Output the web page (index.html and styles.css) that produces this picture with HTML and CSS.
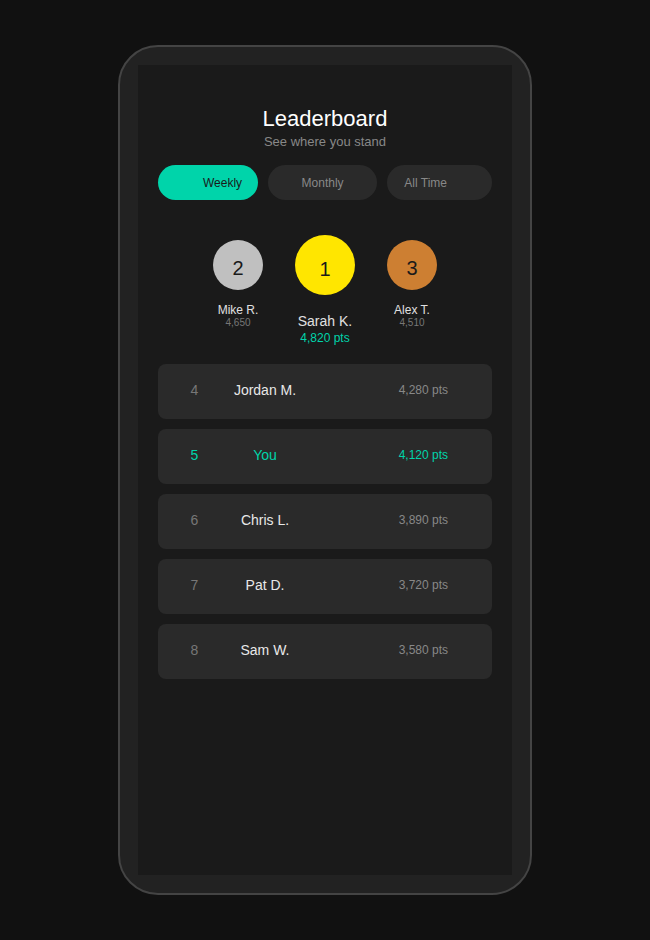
FILE: index.html
```html
<!DOCTYPE html>
<html lang="en">
<head>
<meta charset="utf-8">
<title>Leaderboard</title>
<link rel="stylesheet" href="styles.css">
</head>
<body>
<div class="phone">
  <div class="screen">
    <header class="header">
      <h1 class="title">Leaderboard</h1>
      <p class="subtitle">See where you stand</p>
    </header>
    <nav class="tabs">
      <div class="tab tab-weekly tab-active">Weekly</div>
      <div class="tab tab-monthly">Monthly</div>
      <div class="tab tab-all">All Time</div>
    </nav>
    <section class="podium">
      <div class="place place-side">
        <div class="medal medal-silver">2</div>
        <div class="place-name">Mike R.</div>
        <div class="place-pts">4,650</div>
      </div>
      <div class="place place-first">
        <div class="medal medal-gold">1</div>
        <div class="place-name">Sarah K.</div>
        <div class="place-pts">4,820 pts</div>
      </div>
      <div class="place place-side">
        <div class="medal medal-bronze">3</div>
        <div class="place-name">Alex T.</div>
        <div class="place-pts">4,510</div>
      </div>
    </section>
    <section class="list">
      <div class="row"><span class="rank">4</span><span class="name">Jordan M.</span><span class="pts">4,280 pts</span></div>
      <div class="row row-you"><span class="rank">5</span><span class="name">You</span><span class="pts">4,120 pts</span></div>
      <div class="row"><span class="rank">6</span><span class="name">Chris L.</span><span class="pts">3,890 pts</span></div>
      <div class="row"><span class="rank">7</span><span class="name">Pat D.</span><span class="pts">3,720 pts</span></div>
      <div class="row"><span class="rank">8</span><span class="name">Sam W.</span><span class="pts">3,580 pts</span></div>
    </section>
  </div>
</div>
</body>
</html>
```
FILE: styles.css
```css
* { box-sizing: border-box; }
html, body { margin: 0; padding: 0; }
body {
  background: #111111;
  height: 100vh;
  display: flex;
  align-items: center;
  justify-content: center;
  font-family: "Liberation Sans", Arial, sans-serif;
}
.phone {
  width: 414px;
  height: 850px;
  background: #222222;
  border: 2px solid #444444;
  border-radius: 40px;
  padding: 18px;
}
.screen {
  width: 374px;
  height: 810px;
  background: #1a1a1a;
  padding: 41px 20px 0 20px;
}
.header { text-align: center; }
.title {
  margin: 0;
  font-size: 22px;
  line-height: 26px;
  font-weight: 400;
  color: #ffffff;
}
.subtitle {
  margin: 2px 0 0 0;
  font-size: 13px;
  line-height: 15px;
  color: #888888;
}
.tabs {
  margin-top: 16px;
  display: flex;
  gap: 10px;
}
.tab {
  height: 35px;
  border-radius: 18px;
  background: #2a2a2a;
  color: #888888;
  font-size: 12px;
  display: flex;
  align-items: center;
}
.tab-weekly { width: 100px; padding-left: 45px; }
.tab-monthly { width: 110px; justify-content: center; }
.tab-all { width: 105px; padding-left: 17px; }
.tab-active { background: #00d4aa; color: #1a1a1a; }
.podium {
  margin-top: 35px;
  display: flex;
  justify-content: center;
  align-items: flex-start;
  gap: 32px;
}
.place {
  display: flex;
  flex-direction: column;
  align-items: center;
  text-align: center;
}
.place-side { width: 50px; margin-top: 5px; }
.place-first { width: 60px; }
.medal {
  width: 50px;
  height: 50px;
  border-radius: 50%;
  display: flex;
  align-items: center;
  justify-content: center;
  padding-top: 6px;
  font-size: 20px;
  color: #1a1a1a;
}
.medal-gold { width: 60px; height: 60px; padding-top: 9px; background: #ffe600; }
.medal-silver { background: #c0c0c0; }
.medal-bronze { background: #cd7f32; }
.place-name {
  white-space: nowrap;
  color: #e0e0e0;
  font-size: 12px;
  line-height: 14px;
  margin-top: 13px;
}
.place-pts {
  white-space: nowrap;
  color: #777777;
  font-size: 10px;
  line-height: 12px;
}
.place-first .place-name {
  font-size: 14px;
  line-height: 16px;
  margin-top: 18px;
}
.place-first .place-pts {
  color: #00d4aa;
  font-size: 12px;
  line-height: 14px;
  margin-top: 2px;
}
.list {
  margin-top: 19px;
  display: flex;
  flex-direction: column;
  gap: 10px;
}
.row {
  height: 55px;
  background: #2a2a2a;
  border-radius: 8px;
  display: grid;
  grid-template-columns: 33px 108px 1fr;
  align-items: center;
  padding: 0 44px 3px 20px;
}
.rank { text-align: center; color: #777777; font-size: 14px; }
.name { text-align: center; color: #e8e8e8; font-size: 14px; }
.pts { text-align: right; color: #888888; font-size: 12px; }
.row-you .rank, .row-you .name, .row-you .pts { color: #00d4aa; }
```
